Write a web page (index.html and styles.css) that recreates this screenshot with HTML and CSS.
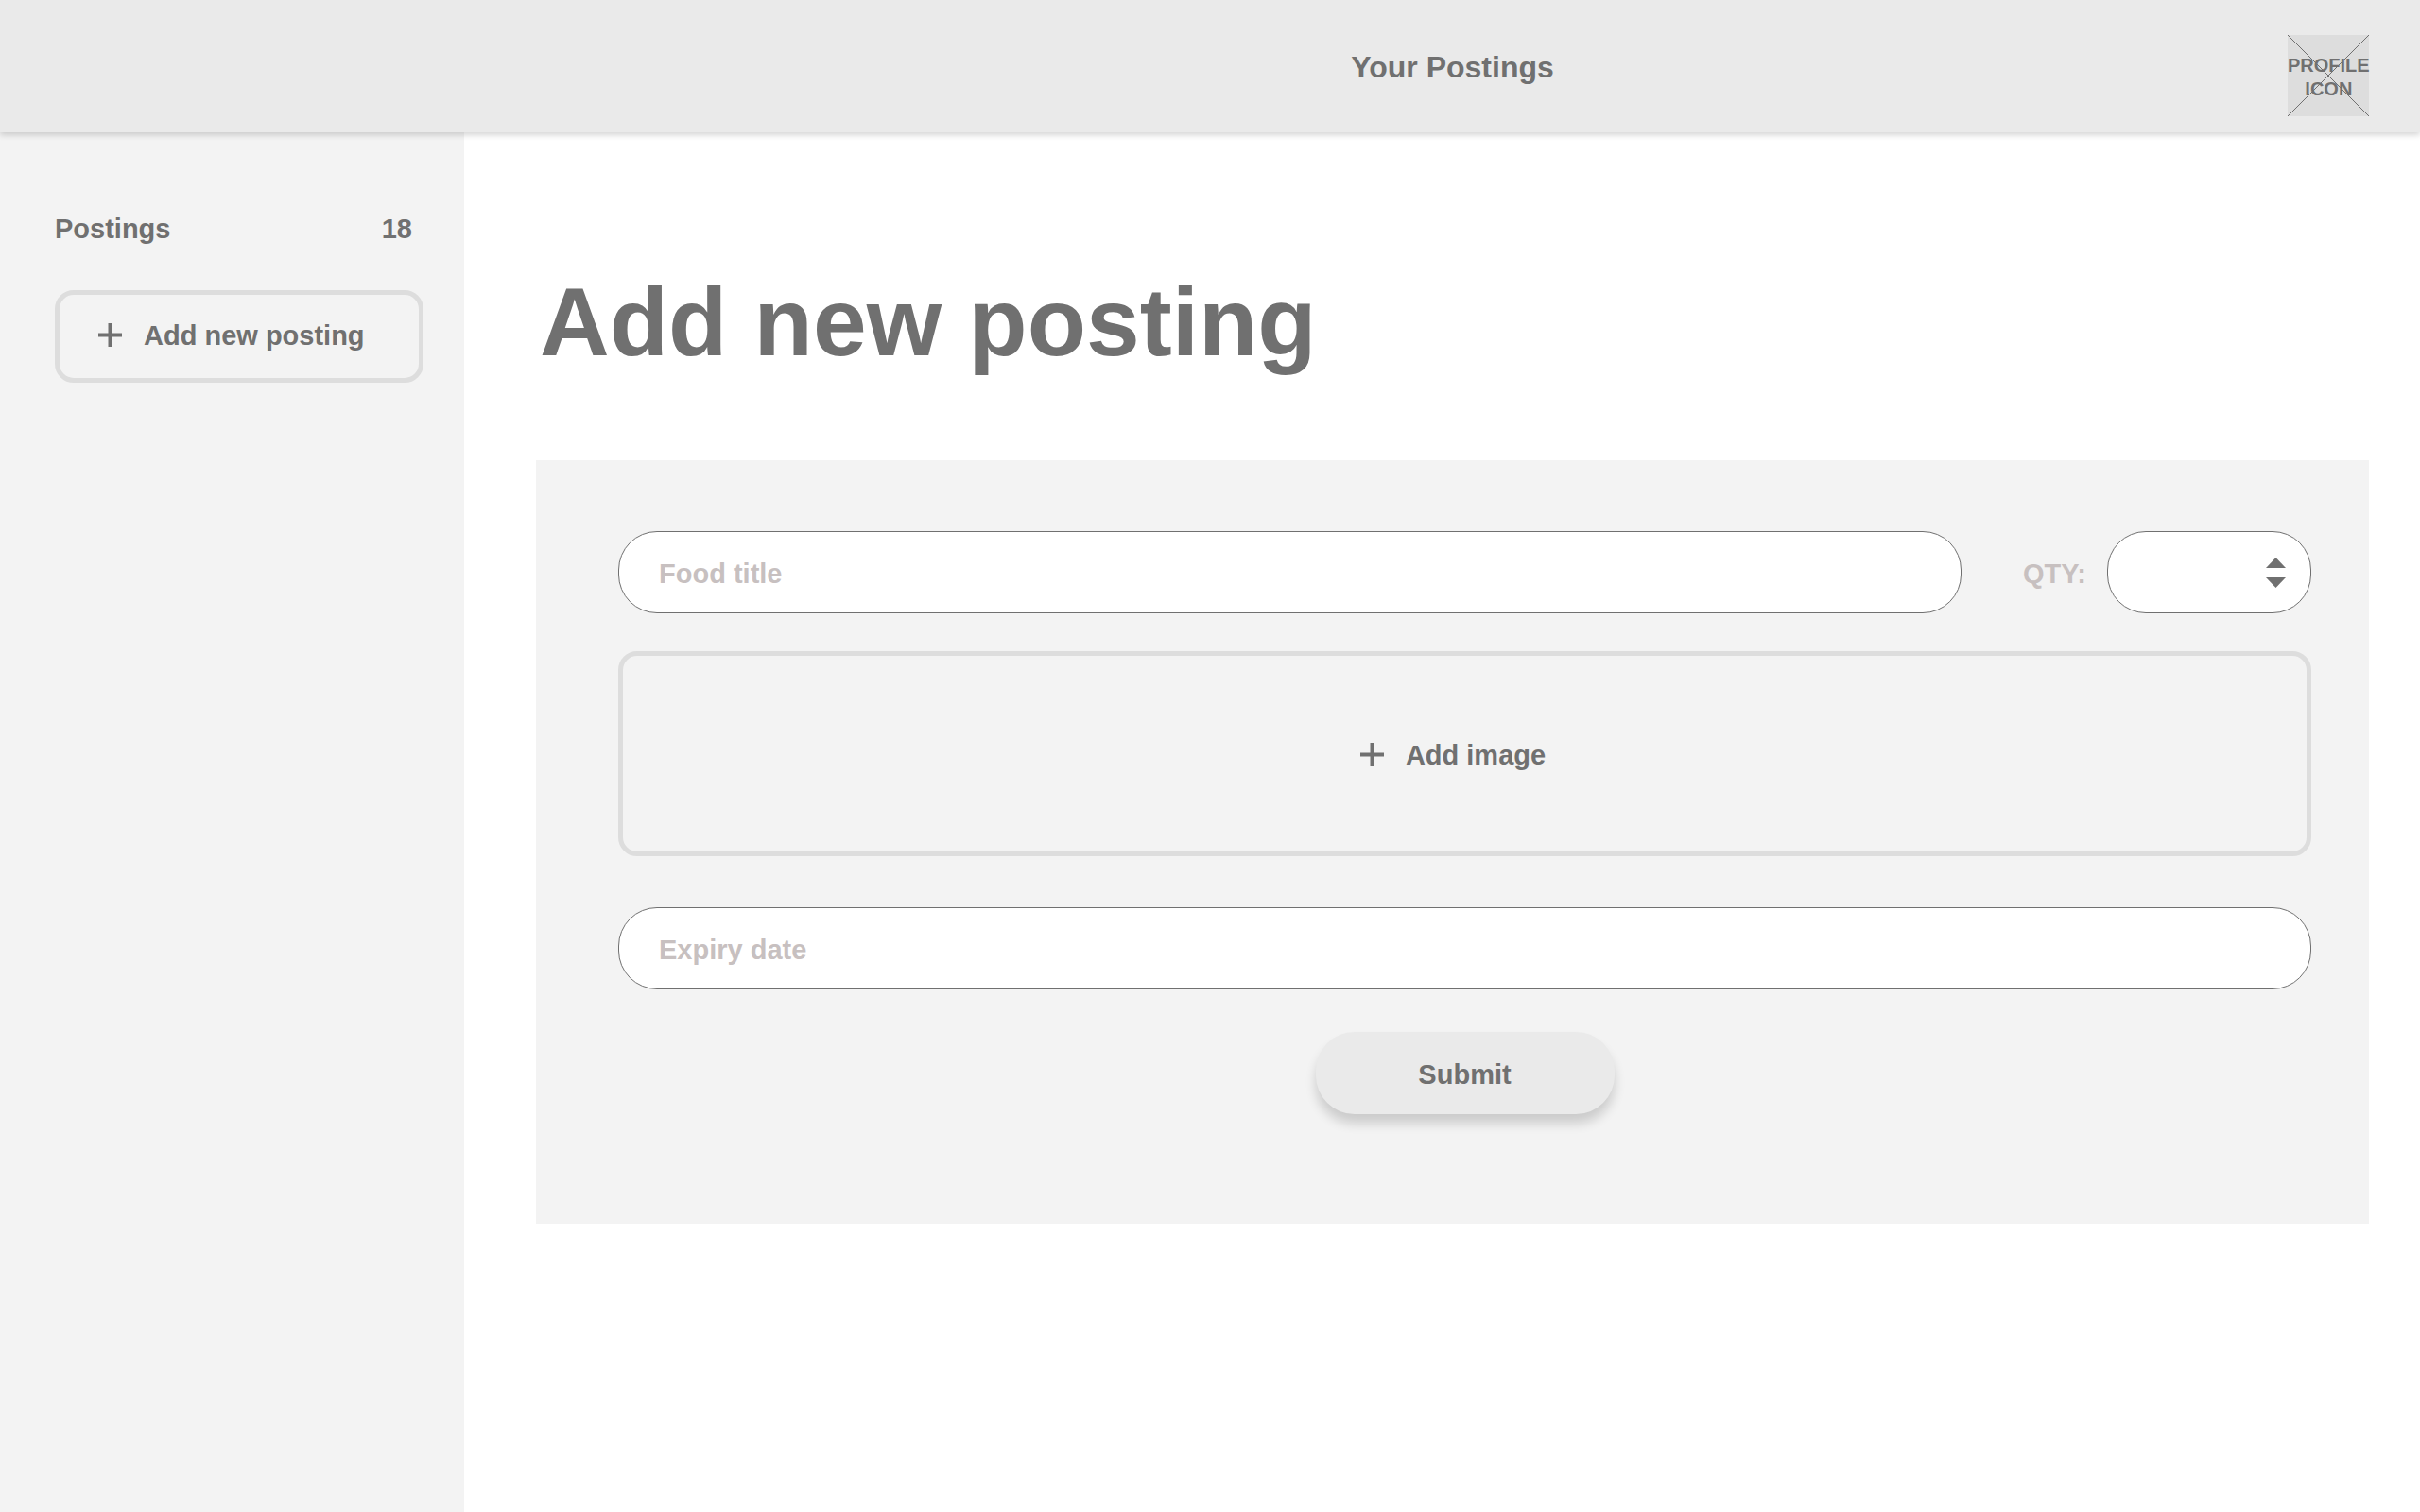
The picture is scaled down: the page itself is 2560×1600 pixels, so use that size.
FILE: index.html
```html
<!DOCTYPE html>
<html lang="en">
<head>
<meta charset="utf-8">
<meta name="viewport" content="width=device-width, initial-scale=1">
<title>Add new posting</title>
<link rel="stylesheet" href="styles.css">
</head>
<body>
<div class="page">
  <header class="topbar">
    <p class="topbar-title">Your Postings</p>
    <a class="profile" href="#profile">
      <svg class="profile-cross" viewBox="0 0 86 86" aria-hidden="true">
        <path d="M0 0L86 86M86 0L0 86"/>
      </svg>
      <span class="profile-label">PROFILE ICON</span>
    </a>
  </header>

  <div class="columns">
    <aside class="sidebar">
      <a class="summary" href="#postings"><span>Postings</span><span>18</span></a>
      <button class="outline-button sidebar-add" type="button">
        <svg class="plus" viewBox="0 0 25 25" aria-hidden="true"><path d="M0 12.5H25M12.5 0V25"/></svg>
        <span>Add new posting</span>
      </button>
    </aside>

    <main class="content">
      <h1 class="heading">Add new posting</h1>
      <form class="panel">
        <div class="title-row">
          <input class="field" type="text" placeholder="Food title" aria-label="Food title">
          <label class="qty-label" for="qty">QTY:</label>
          <div class="qty">
            <input class="qty-input" id="qty" type="number" min="0">
            <div class="stepper">
              <button class="step" type="button" aria-label="Increase">
                <svg viewBox="0 0 21 11" aria-hidden="true"><path d="M10.5 0L21 11H0Z"/></svg>
              </button>
              <button class="step" type="button" aria-label="Decrease">
                <svg viewBox="0 0 21 11" aria-hidden="true"><path d="M10.5 11L21 0H0Z"/></svg>
              </button>
            </div>
          </div>
        </div>
        <button class="outline-button image-add" type="button">
          <svg class="plus" viewBox="0 0 25 25" aria-hidden="true"><path d="M0 12.5H25M12.5 0V25"/></svg>
          <span>Add image</span>
        </button>
        <input class="field" type="text" placeholder="Expiry date" aria-label="Expiry date">
        <button class="submit" type="submit">Submit</button>
      </form>
    </main>
  </div>
</div>
</body>
</html>
```
FILE: styles.css
```css
* {
  box-sizing: border-box;
}

body {
  margin: 0;
  background: #fff;
  color: #707070;
  font-family: "Liberation Sans", Arial, sans-serif;
  font-size: 29px;
  font-weight: 700;
}

button,
input {
  font: inherit;
  color: inherit;
}

button {
  cursor: pointer;
}

a {
  color: inherit;
  text-decoration: none;
}

.page {
  display: flex;
  flex-direction: column;
  min-height: 100vh;
}

/* Top bar */

.topbar {
  position: relative;
  z-index: 1;
  display: grid;
  padding: 37px 54px 17px 567px;
  background: #eaeaea;
  box-shadow: 0 3px 6px rgba(0, 0, 0, 0.16);
}

.topbar-title {
  grid-area: 1 / 1;
  justify-self: center;
  margin: 0;
  padding-top: 16px;
  font-size: 32px;
  line-height: 36px;
}

.profile {
  grid-area: 1 / 1;
  justify-self: end;
  display: grid;
  width: 86px;
  height: 86px;
  background: #ddd;
  font-size: 20px;
  line-height: 25px;
  text-align: center;
}

.profile-cross {
  grid-area: 1 / 1;
  width: 86px;
  height: 86px;
  stroke: #707070;
  stroke-width: 1;
}

.profile-label {
  grid-area: 1 / 1;
  align-self: center;
  padding-top: 4px;
}

/* Columns */

.columns {
  display: flex;
  flex: 1;
}

.sidebar {
  flex: none;
  width: 491px;
  padding: 85px 43px 40px 58px;
  background: #f3f3f3;
}

.summary {
  display: flex;
  justify-content: space-between;
  padding-right: 12px;
  line-height: 34px;
}

.outline-button {
  display: flex;
  align-items: center;
  gap: 23px;
  width: 100%;
  border: 5px solid #ddd;
  border-radius: 20px;
  background: transparent;
}

.sidebar-add {
  height: 98px;
  margin-top: 48px;
  padding: 0 41px 2px;
}

.plus {
  flex: none;
  width: 25px;
  height: 25px;
  margin-bottom: 2px;
  stroke: #707070;
  stroke-width: 4;
}

.content {
  flex: 1;
  min-width: 0;
  padding: 141px 54px 54px 76px;
}

.heading {
  margin: 0 0 86px;
  padding-left: 4px;
  font-size: 102px;
  line-height: 120px;
}

/* Posting form */

.panel {
  display: flex;
  flex-direction: column;
  padding: 75px 61px 116px 87px;
  background: #f3f3f3;
}

.title-row {
  display: flex;
  align-items: center;
}

.field,
.qty {
  height: 87px;
  border: 1px solid #707070;
  border-radius: 41px;
  background: #fff;
}

.field {
  flex: 1 1 auto;
  min-width: 0;
  padding: 4px 42px 0;
}

.panel > .field {
  flex: none;
}

.field::placeholder {
  color: #c7c0c0;
  opacity: 1;
}

.qty-label {
  margin: 0 22px 0 65px;
  padding-top: 3px;
  color: #c7c0c0;
}

.qty {
  display: flex;
  align-items: center;
  width: 216px;
  padding: 0 26px;
}

.qty-input {
  flex: 1;
  min-width: 0;
  border: 0;
  outline: 0;
  background: transparent;
  appearance: textfield;
}

.qty-input::-webkit-inner-spin-button {
  display: none;
}

.stepper {
  display: grid;
  gap: 10px;
}

.step {
  padding: 0;
  border: 0;
  background: none;
}

.step svg {
  display: block;
  width: 21px;
  height: 11px;
  fill: #707070;
}

.image-add {
  justify-content: center;
  height: 217px;
  margin: 40px 0 54px;
  padding: 3px 25px 0 0;
}

.submit {
  align-self: center;
  width: 316px;
  height: 87px;
  margin-top: 45px;
  padding: 3px 0 0;
  border: 0;
  border-radius: 41px;
  background: #eaeaea;
  box-shadow: 0 10px 12px rgba(0, 0, 0, 0.16);
}
```
